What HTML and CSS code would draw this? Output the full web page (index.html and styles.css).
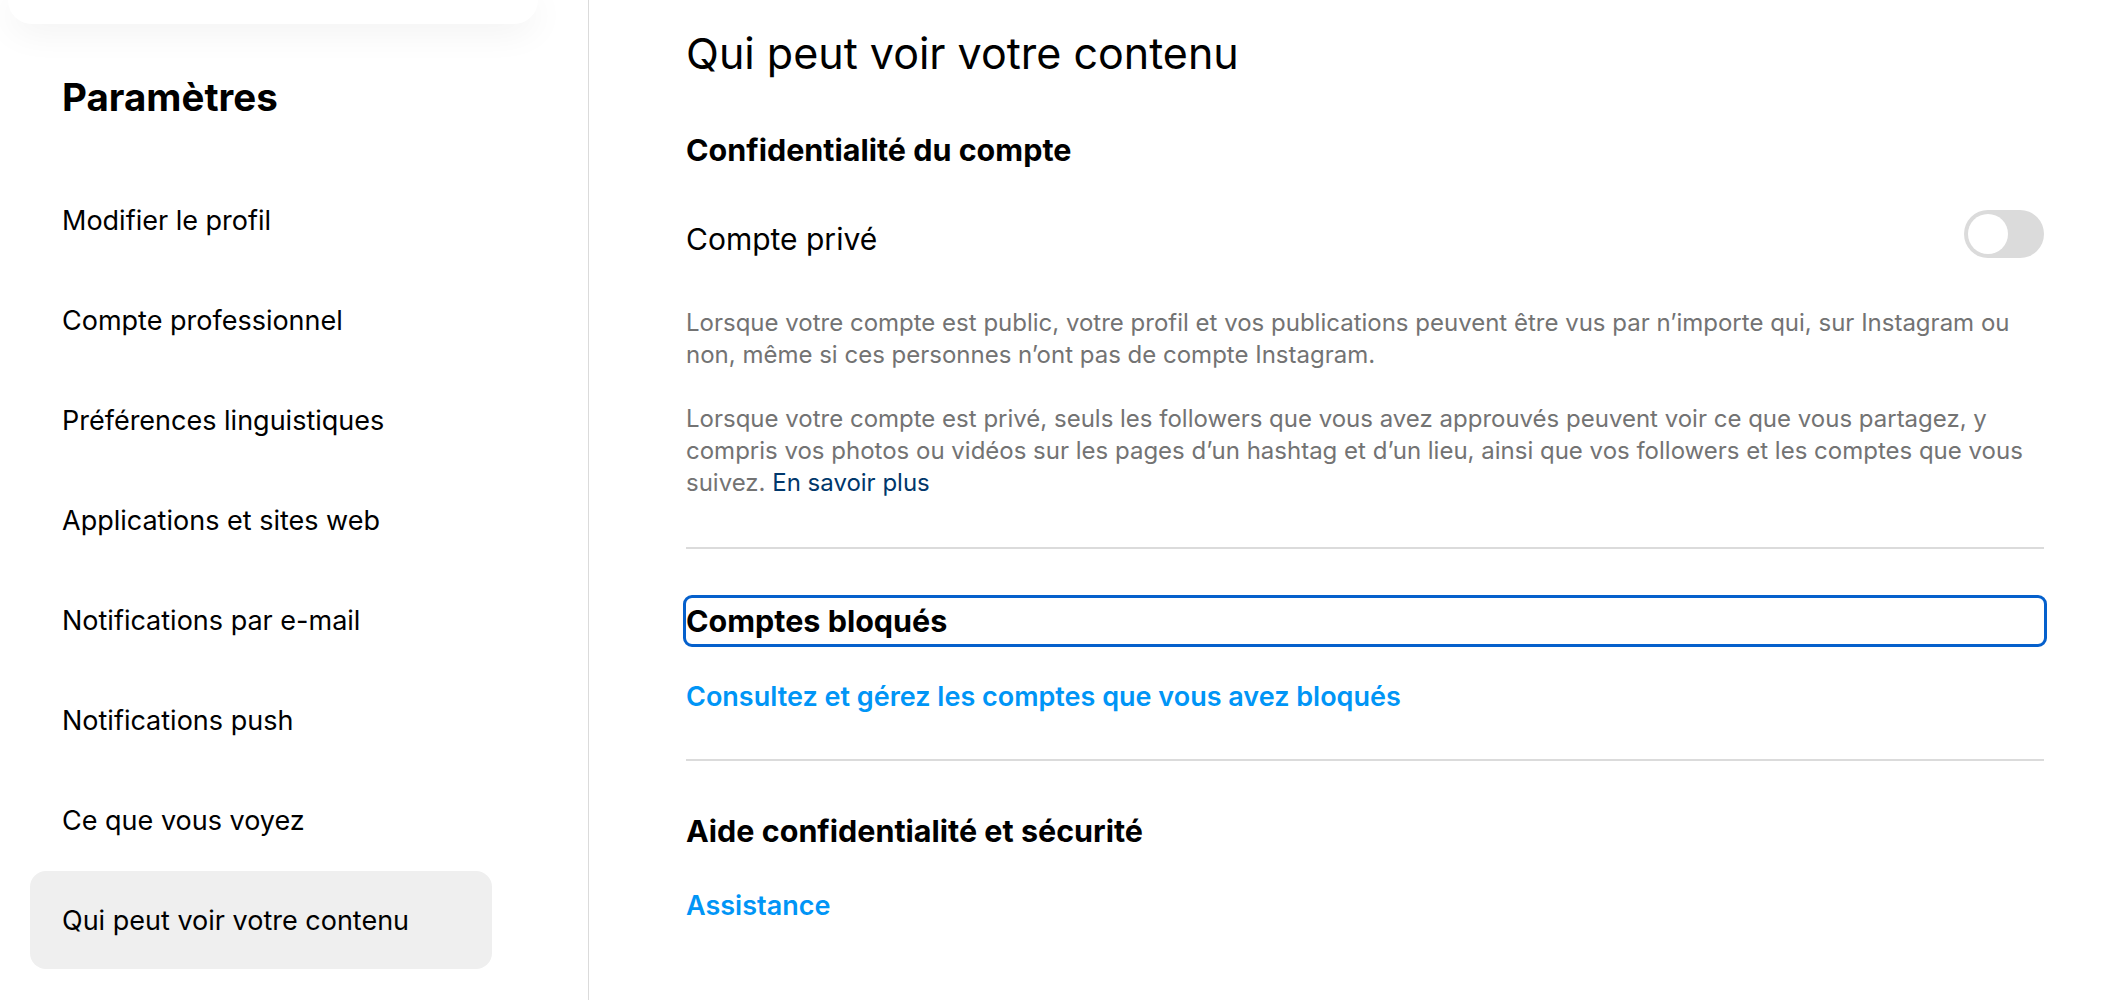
FILE: index.html
```html
<!DOCTYPE html>
<html lang="fr">
<head>
  <meta charset="UTF-8" />
  <meta name="viewport" content="width=device-width, initial-scale=1.0"/>
  <title>Paramètres • Qui peut voir votre contenu</title>
  <link rel="stylesheet" href="styles.css">
</head>
<body>
  <div class="layout">
    <aside class="sidebar">
      <div class="top-card"></div>
      <h1 class="sidebar-title">Paramètres</h1>
      <nav class="menu">
        <a class="menu-item" href="#">Modifier le profil</a>
        <a class="menu-item" href="#">Compte professionnel</a>
        <a class="menu-item" href="#">Préférences linguistiques</a>
        <a class="menu-item" href="#">Applications et sites web</a>
        <a class="menu-item" href="#">Notifications par e-mail</a>
        <a class="menu-item" href="#">Notifications push</a>
        <a class="menu-item" href="#">Ce que vous voyez</a>
        <a class="menu-item active" href="#">Qui peut voir votre contenu</a>
      </nav>
    </aside>

    <main class="content">
      <h2 class="page-title">Qui peut voir votre contenu</h2>

      <section class="block">
        <h3 class="section-title">Confidentialité du compte</h3>
        <div class="toggle-row">
          <span class="toggle-label">Compte privé</span>
          <label class="switch">
            <input type="checkbox" />
            <span class="knob"></span>
          </label>
        </div>
        <p class="help first">Lorsque votre compte est public, votre profil et vos publications peuvent être vus par n’importe qui, sur Instagram ou non, même si ces personnes n’ont pas de compte Instagram.</p>
        <p class="help">Lorsque votre compte est privé, seuls les followers que vous avez approuvés peuvent voir ce que vous partagez, y compris vos photos ou vidéos sur les pages d’un hashtag et d’un lieu, ainsi que vos followers et les comptes que vous suivez. <a class="more" href="#">En savoir plus</a></p>
      </section>

      <hr class="divider first-divider" />

      <section class="block">
        <h3 class="section-title focused">Comptes bloqués</h3>
        <a class="link blocked-link" href="#">Consultez et gérez les comptes que vous avez bloqués</a>
      </section>

      <hr class="divider second-divider" />

      <section class="block">
        <h3 class="section-title help-title">Aide confidentialité et sécurité</h3>
        <a class="link help-link" href="#">Assistance</a>
      </section>
    </main>
  </div>
</body>
</html>
```
FILE: styles.css
```css
body { margin: 0; font-family: Inter, "Noto Sans", Arial, sans-serif; color: #000; background: #fff; }
a { text-decoration: none; color: inherit; }

.layout { display: flex; min-height: 100vh; }

/* left column */
.sidebar { width: 588px; flex-shrink: 0; border-right: 1px solid #dbdbdb; }
.top-card { height: 24px; margin: 0 50px 0 8px; background: #fff; border-radius: 0 0 24px 24px; box-shadow: 0 6px 36px rgba(0, 0, 0, 0.07); }
.sidebar-title { margin: 50px 0 0 62px; font-size: 38.5px; line-height: 46px; font-weight: 700; }
.menu { display: flex; flex-direction: column; gap: 2px; width: 462px; margin: 51px 0 0 30px; }
.menu-item { display: flex; align-items: center; height: 98px; padding-left: 32px; font-size: 27px; border-radius: 16px; }
.menu-item.active { background: #efefef; }

/* right column */
.content { flex: 1; padding: 27px 78px 40px 97px; }
.page-title { margin: 0; font-size: 43px; line-height: 52px; font-weight: 400; }
.section-title { margin: 0; font-size: 30.5px; line-height: 40px; font-weight: 700; }
.block:first-of-type .section-title { margin-top: 51px; }

.toggle-row { display: flex; align-items: center; justify-content: space-between; height: 48px; margin-top: 40px; }
.toggle-label { padding-top: 10px; font-size: 30px; line-height: 40px; }
.switch { position: relative; width: 80px; height: 48px; }
.switch input { display: none; }
.knob { display: block; width: 80px; height: 48px; border-radius: 24px; background: #dbdbdb; }
.knob::before { content: ""; position: absolute; top: 4px; left: 4px; width: 40px; height: 40px; border-radius: 50%; background: #fff; }

.help { margin: 0; font-size: 24px; line-height: 32px; color: #737373; }
.help.first { margin-top: 49px; margin-bottom: 32px; }
.more { color: #00376b; }

.divider { height: 2px; margin: 0; border: 0; background: #dbdbdb; }
.first-divider { margin-top: 48px; }
.second-divider { margin-top: 44px; }

.section-title.focused { margin-top: 49px; padding: 3px 0; outline: 3px solid #0560cc; border-radius: 6px; }
.section-title.help-title { margin-top: 50px; }

.link { display: block; font-size: 27px; line-height: 36px; font-weight: 600; color: #0095f6; }
.blocked-link { margin-top: 35px; }
.help-link { margin-top: 37px; }
```
